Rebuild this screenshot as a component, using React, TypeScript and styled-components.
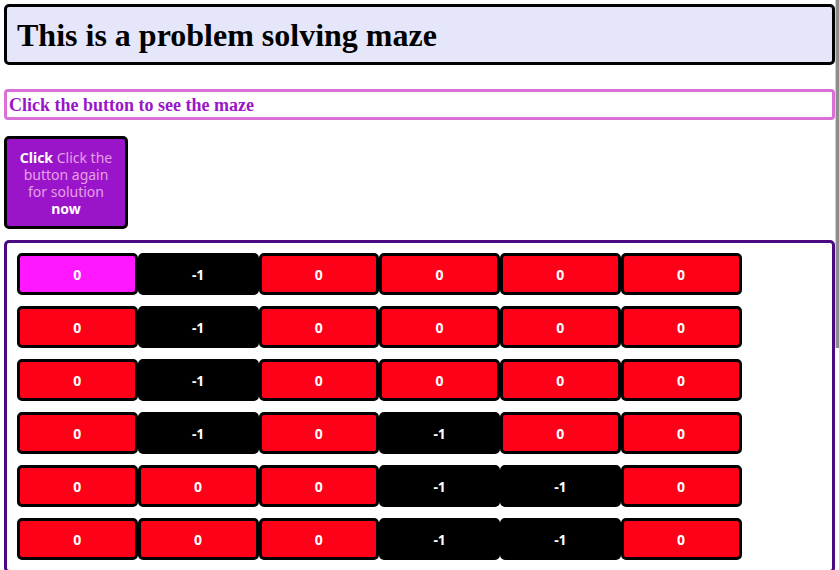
import React from "react";
import styled, { createGlobalStyle } from "styled-components";

const GlobalStyle = createGlobalStyle`
  html, body { overflow: hidden; }
  body {
    margin: 0;
    padding: 4px;
    background: #ffffff;
    font-family: "Liberation Serif", serif;
  }
  * { box-sizing: border-box; }
`;

const Page = styled.div`
  display: flex;
  flex-direction: column;
  align-items: flex-start;
  width: 831px;
`;

const TitleBox = styled.div`
  width: 100%;
  background: #e6e6fa;
  border: 3px solid #000;
  border-radius: 5px;
  padding: 10px 10px 8px;
`;

const Title = styled.h1`
  margin: 0;
  font-family: "Liberation Serif", serif;
  font-size: 32px;
  font-weight: bold;
  line-height: 37px;
  color: #000;
`;

const Prompt = styled.div`
  margin-top: 24px;
  width: 100%;
  border: 3px solid #da70d6;
  border-radius: 4px;
  padding: 3px 2px 1px;
  font-family: "Liberation Serif", serif;
  font-size: 18px;
  font-weight: bold;
  line-height: 21px;
  color: #9915c9;
`;

const ActionButton = styled.button`
  margin-top: 16px;
  width: 124px;
  height: 93px;
  background: #9a15c9;
  border: 3px solid #000;
  border-radius: 5px;
  padding: 0 9px;
  font-family: "Noto Sans", "DejaVu Sans", sans-serif;
  font-size: 14px;
  line-height: 17px;
  font-weight: bold;
  color: #ffffff;
  text-align: center;
  cursor: pointer;
`;

const Hint = styled.span`
  font-weight: normal;
  color: #e6a0e6;
`;

const MazeBox = styled.div`
  margin-top: 11px;
  width: 100%;
  border: 3px solid #4b0a82;
  border-radius: 5px;
  padding: 10px;
  display: flex;
  flex-direction: column;
  gap: 11px;
`;

const Row = styled.div`
  display: flex;
`;

type Kind = "start" | "open" | "wall";

const colours: Record<Kind, string> = {
  start: "#ff17ff",
  open: "#ff0019",
  wall: "#000000",
};

const Cell = styled.div<{ $kind: Kind }>`
  width: 15%;
  height: 42px;
  display: flex;
  align-items: center;
  justify-content: center;
  background: ${(p) => colours[p.$kind]};
  border: 3px solid #000;
  border-radius: 5px;
  font-family: "Noto Sans", "DejaVu Sans", sans-serif;
  font-size: 14px;
  font-weight: bold;
  color: #ffffff;
`;

const ScrollThumb = styled.div`
  position: fixed;
  top: 0;
  right: 0;
  width: 4px;
  height: 348px;
  background: #8c8c8c;
  border-left: 1px solid #cfcfcf;
`;

const maze: number[][] = [
  [0, -1, 0, 0, 0, 0],
  [0, -1, 0, 0, 0, 0],
  [0, -1, 0, 0, 0, 0],
  [0, -1, 0, -1, 0, 0],
  [0, 0, 0, -1, -1, 0],
  [0, 0, 0, -1, -1, 0],
];

export default function App() {
  return (
    <>
      <GlobalStyle />
      <Page>
        <TitleBox>
          <Title>This is a problem solving maze</Title>
        </TitleBox>
        <Prompt>Click the button to see the maze</Prompt>
        <ActionButton>
          Click <Hint>Click the button again for solution</Hint> now
        </ActionButton>
        <MazeBox>
          {maze.map((row, r) => (
            <Row key={r}>
              {row.map((v, c) => {
                const kind: Kind =
                  r === 0 && c === 0 ? "start" : v === -1 ? "wall" : "open";
                return (
                  <Cell key={c} $kind={kind}>
                    {v}
                  </Cell>
                );
              })}
            </Row>
          ))}
        </MazeBox>
      </Page>
      <ScrollThumb />
    </>
  );
}
